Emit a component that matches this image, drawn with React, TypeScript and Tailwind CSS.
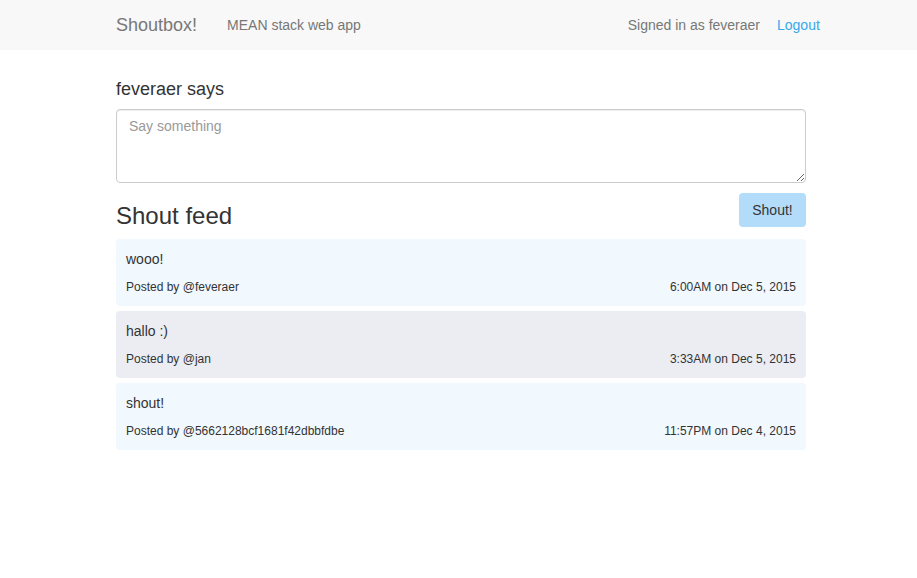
const shouts = [
    { id: 1, text: 'wooo!', author: '@feveraer', when: '6:00AM on Dec 5, 2015', bg: 'bg-[#f1f8fe]' },
    { id: 2, text: 'hallo :)', author: '@jan', when: '3:33AM on Dec 5, 2015', bg: 'bg-[#ebedf2]' },
    { id: 3, text: 'shout!', author: '@5662128bcf1681f42dbbfdbe', when: '11:57PM on Dec 4, 2015', bg: 'bg-[#f1f8fe]' },
]

export default function App() {
    return (
        <div className="min-h-screen bg-white text-[#333] font-['Liberation_Sans',Arial,sans-serif]">
            <nav className="h-[50px] bg-[#f8f8f8]">
                <div className="ml-[116px] w-[705px] h-full flex items-center text-[#777]">
                    <span className="text-[18px]">Shoutbox!</span>
                    <span className="ml-[30px] text-[14px]">MEAN stack web app</span>
                    <span className="ml-auto text-[14px]">Signed in as feveraer</span>
                    <a href="#" className="ml-[17px] w-[44px] text-[14px] text-[#36a9eb]">Logout</a>
                </div>
            </nav>

            <main className="ml-[116px] w-[690px]">
                <h4 className="mt-[29px] text-[18px] leading-[20px]">feveraer says</h4>
                <textarea
                    placeholder="Say something"
                    className="mt-[10px] block w-full h-[74px] border border-[#ccc] rounded px-[12px] py-[6px] text-[14px] leading-[20px] placeholder:text-[#999] shadow-[inset_0_1px_1px_rgba(0,0,0,0.075)] outline-none"
                />
                <div className="mt-[10px] flex items-start justify-between">
                    <h3 className="mt-[10px] text-[24px] leading-[26px]">Shout feed</h3>
                    <button className="h-[34px] w-[67px] rounded bg-[#b3dcfb] text-[14px] text-[#333]">Shout!</button>
                </div>

                <div className="mt-[10px] flex flex-col gap-[5px]">
                    {shouts.map((shout) => (
                        <div key={shout.id} className={`${shout.bg} rounded px-[10px] pt-[10px] pb-[10px]`}>
                            <p className="text-[14px] leading-[20px]">{shout.text}</p>
                            <div className="mt-[10px] flex justify-between text-[12px] leading-[17px]">
                                <span>Posted by {shout.author}</span>
                                <span>{shout.when}</span>
                            </div>
                        </div>
                    ))}
                </div>
            </main>
        </div>
    )
}
